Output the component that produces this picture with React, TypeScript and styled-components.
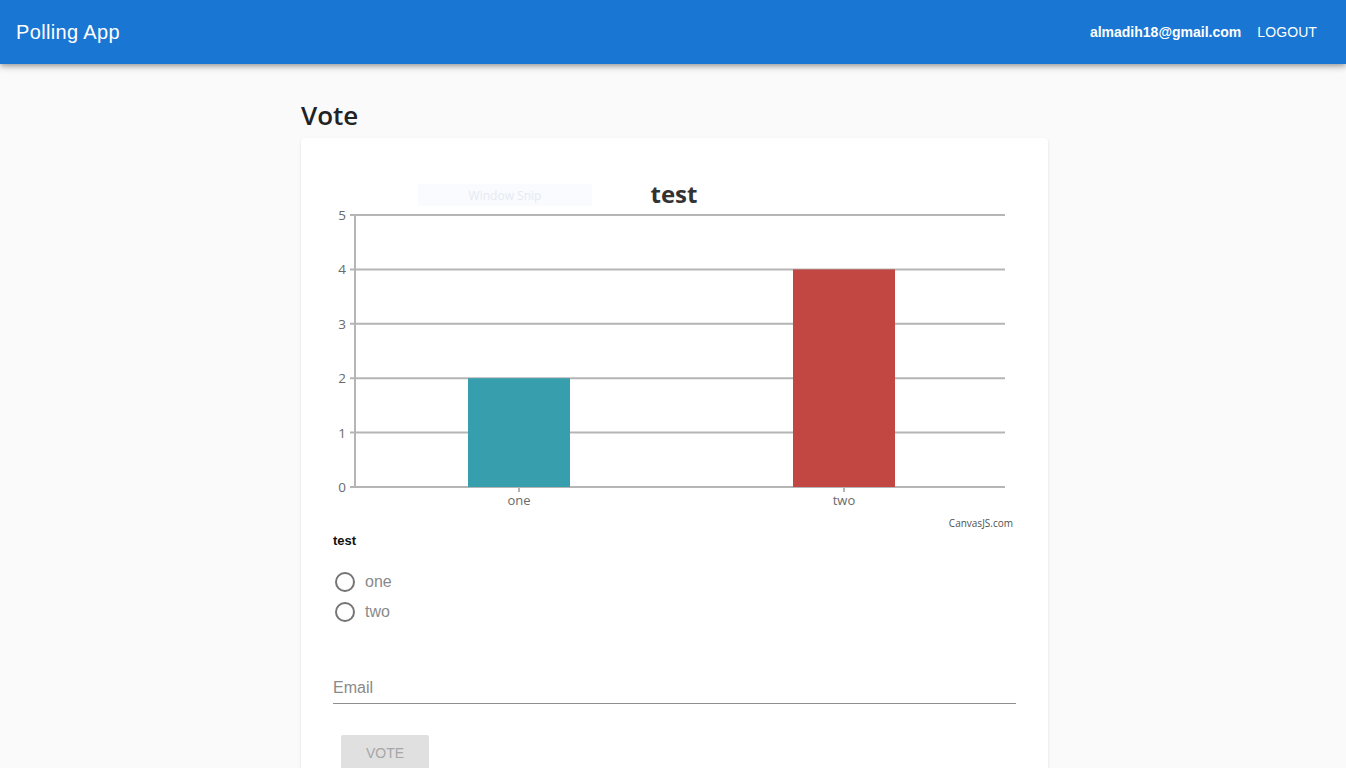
import React from "react";
import styled, { createGlobalStyle } from "styled-components";

const Global = createGlobalStyle`
  html, body { margin: 0; padding: 0; background: #fafafa; }
  body { font-family: "Liberation Sans", Arial, sans-serif; }
  * { box-sizing: border-box; }
`;

const AppBar = styled.header`
  height: 64px;
  background: #1976d2;
  color: #fff;
  display: flex;
  align-items: center;
  justify-content: space-between;
  padding: 0 29px 0 16px;
  box-shadow: 0px 2px 4px -1px rgba(0,0,0,0.2), 0px 4px 5px 0px rgba(0,0,0,0.14), 0px 1px 10px 0px rgba(0,0,0,0.12);
  position: relative;
  z-index: 2;
`;

const Brand = styled.div`
  font-family: "Liberation Sans", Arial, sans-serif;
  font-size: 20px;
  letter-spacing: 0.35px;
`;

const NavRight = styled.div`
  display: flex;
  align-items: center;
  gap: 16px;
  font-size: 14px;
`;

const UserEmail = styled.span`
  font-weight: bold;
`;

const Logout = styled.span`
  text-transform: uppercase;
  letter-spacing: 0.1px;
`;

const Main = styled.main`
  display: flex;
  justify-content: center;
  padding-left: 3px;
`;

const Column = styled.div`
  width: 747px;
`;

const Heading = styled.h2`
  margin: 36px 0 8px;
  font-family: "Open Sans", sans-serif;
  font-weight: 600;
  font-size: 26px;
  line-height: 30px;
  color: #222;
`;

const Card = styled.section`
  background: #fff;
  border-radius: 4px;
  box-shadow: 0px 1px 3px 0px rgba(0,0,0,0.1), 0px 1px 1px 0px rgba(0,0,0,0.06);
  padding: 32px 32px 40px;
  min-height: 640px;
`;

const ChartSvg = styled.svg`
  display: block;
  width: 683px;
  height: 362px;
`;

const QuestionLabel = styled.div`
  font-family: "Liberation Sans", Arial, sans-serif;
  font-weight: bold;
  font-size: 13px;
  color: #111;
  margin: 1px 0 24px;
`;

const RadioList = styled.div`
  display: flex;
  flex-direction: column;
  gap: 10px;
  padding-left: 2px;
`;

const RadioRow = styled.label`
  display: flex;
  align-items: center;
  gap: 10px;
  height: 20px;
  font-family: "Liberation Sans", Arial, sans-serif;
  font-size: 16px;
  color: #8a8a8a;
`;

const RadioCircle = styled.span`
  width: 20px;
  height: 20px;
  border-radius: 50%;
  border: 2px solid #757575;
`;

const Field = styled.div`
  margin-top: 56px;
  border-bottom: 1px solid #8f8f8f;
  padding-bottom: 5px;
  font-family: "Liberation Sans", Arial, sans-serif;
  font-size: 16px;
  color: #8a8a8a;
  line-height: 20px;
`;

const VoteButton = styled.button`
  margin: 31px 0 0 8px;
  width: 88px;
  height: 36px;
  border: none;
  border-radius: 2px;
  background: #e0e0e0;
  color: #a6a6a6;
  font-family: "Liberation Sans", Arial, sans-serif;
  font-size: 14px;
  text-transform: uppercase;
`;

const chartFont = '"Open Sans", "Noto Sans", sans-serif';

function Chart() {
  const top = 45;
  const bottom = 317;
  const step = (bottom - top) / 5;
  const left = 22;
  const right = 672;
  const ticks = [0, 1, 2, 3, 4, 5];
  const bars = [
    { label: "one", value: 2, x: 135, color: "#369ead" },
    { label: "two", value: 4, x: 460, color: "#c24642" },
  ];
  return (
    <ChartSvg viewBox="0 0 683 362">
      <rect x={85} y={14} width={174} height={22} fill="#f9fbff" />
      <text x={172} y={30} textAnchor="middle" fontFamily={chartFont} fontSize={12} fill="#e6eaf0">Window Snip</text>
      <text x={341} y={33} textAnchor="middle" fontFamily={chartFont} fontSize={24} fontWeight={700} fill="#333">test</text>
      {ticks.map((t) => {
        const y = bottom - t * step;
        return (
          <g key={t}>
            <line x1={left - 5} x2={right} y1={y} y2={y} stroke="#b5b5b5" strokeWidth={2} />
            <text x={13} y={y + 5} textAnchor="end" fontFamily={chartFont} fontSize={13.5} fill="#6a6a6a">{t}</text>
          </g>
        );
      })}
      <line x1={left} x2={left} y1={top - 1} y2={bottom + 1} stroke="#b5b5b5" strokeWidth={2} />
      {bars.map((b) => (
        <g key={b.label}>
          <rect x={b.x} y={bottom - b.value * step} width={102} height={b.value * step} fill={b.color} />
          <line x1={b.x + 51} x2={b.x + 51} y1={bottom} y2={bottom + 5} stroke="#b5b5b5" strokeWidth={2} />
          <text x={b.x + 51} y={335} textAnchor="middle" fontFamily={chartFont} fontSize={13} fill="#6a6a6a">{b.label}</text>
        </g>
      ))}
      <text x={680} y={357} textAnchor="end" fontFamily={chartFont} fontSize={10} fill="#505050">CanvasJS.com</text>
    </ChartSvg>
  );
}

export default function App() {
  return (
    <>
      <Global />
      <AppBar>
        <Brand>Polling App</Brand>
        <NavRight>
          <UserEmail>almadih18@gmail.com</UserEmail>
          <Logout>Logout</Logout>
        </NavRight>
      </AppBar>
      <Main>
        <Column>
          <Heading>Vote</Heading>
          <Card>
            <Chart />
            <QuestionLabel>test</QuestionLabel>
            <RadioList>
              <RadioRow><RadioCircle />one</RadioRow>
              <RadioRow><RadioCircle />two</RadioRow>
            </RadioList>
            <Field>Email</Field>
            <VoteButton>Vote</VoteButton>
          </Card>
        </Column>
      </Main>
    </>
  );
}
